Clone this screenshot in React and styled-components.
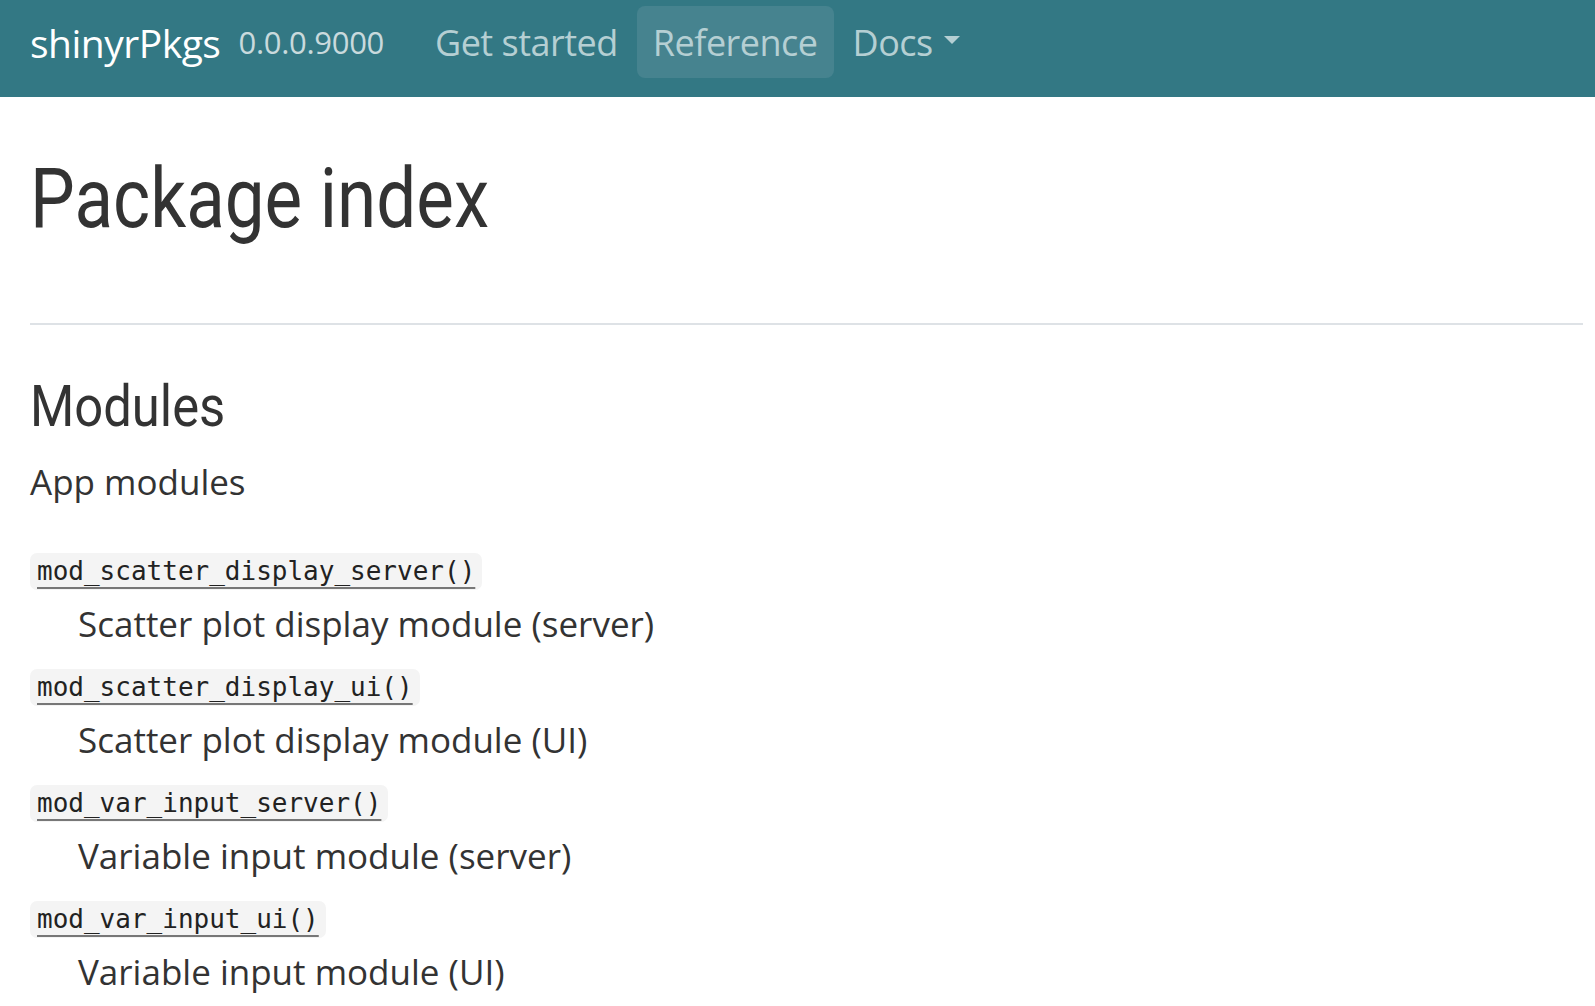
import React from 'react'
import styled, {createGlobalStyle} from 'styled-components'

const Global = createGlobalStyle`
  body {
    margin: 0;
    font-family: "Open Sans", "Noto Sans", sans-serif;
    color: #333;
    background: #fff;
  }
`

const items = [
  {name: 'mod_scatter_display_server()', desc: 'Scatter plot display module (server)'},
  {name: 'mod_scatter_display_ui()', desc: 'Scatter plot display module (UI)'},
  {name: 'mod_var_input_server()', desc: 'Variable input module (server)'},
  {name: 'mod_var_input_ui()', desc: 'Variable input module (UI)'},
]

function App() {
  return (
    <Wrap>
      <Global />
      <Nav>
        <Brand>shinyrPkgs</Brand>
        <Version>0.0.0.9000</Version>
        <Menu>
          <NavLink>Get started</NavLink>
          <NavLink active>Reference</NavLink>
          <NavLink>Docs<Caret /></NavLink>
        </Menu>
      </Nav>

      <Main>
        <Title>Package index</Title>
        <Rule />
        <Section>Modules</Section>
        <Sub>App modules</Sub>
        <List>
          {items.map(it => (
            <Item key={it.name}>
              <dt><Code>{it.name}</Code></dt>
              <Desc>{it.desc}</Desc>
            </Item>
          ))}
        </List>
      </Main>
    </Wrap>
  )
}

const Wrap = styled.div`
  width: 100%;
  min-height: 100vh;
`
const Nav = styled.nav`
  height: 97px;
  background: #337884;
  display: flex;
  align-items: center;
  padding: 6px 30px 19px;
  box-sizing: border-box;
`
const Brand = styled.span`
  color: #fff;
  font-size: 39px;
  letter-spacing: -0.5px;
`
const Version = styled.span`
  color: #c9dadd;
  font-size: 31px;
  margin-left: 18px;
  letter-spacing: -0.3px;
`
const Menu = styled.div`
  display: flex;
  align-items: center;
  gap: 3px;
  margin-left: 35px;
`
const NavLink = styled.span`
  display: flex;
  align-items: center;
  font-size: 36px;
  letter-spacing: -0.5px;
  color: #b5cfd3;
  padding: 0 16px;
  height: 72px;
  border-radius: 8px;
  background: ${p => p.active ? '#46838f' : 'transparent'};
`
const Caret = styled.span`
  display: inline-block;
  margin-left: 11px;
  border-top: 8px solid #b5cfd3;
  border-left: 8px solid transparent;
  border-right: 8px solid transparent;
  transform: translateY(-2px);
`
const Main = styled.main`
  padding: 0 12px 0 30px;
`
const Condensed = `
  font-family: "Roboto", "Liberation Sans", sans-serif;
  font-weight: 400;
  line-height: 1.1;
  color: #333;
  display: inline-block;
  transform-origin: left center;
`
const Title = styled.h1`
  ${Condensed}
  font-size: 84px;
  transform: scaleX(0.845);
  margin: 56px 0 0 0;
`
const Rule = styled.hr`
  border: 0;
  border-top: 2px solid #dee2e6;
  margin: 78px 0 0 0;
`
const Section = styled.h2`
  ${Condensed}
  font-size: 58px;
  transform: scaleX(0.875);
  margin: 50px 0 0 0;
`
const Sub = styled.p`
  font-size: 35px;
  margin: 19px 0 0 0;
  color: #333;
`
const List = styled.dl`
  margin: 48px 0 0 0;
`
const Item = styled.div`
  margin-bottom: 19px;
`
const Code = styled.code`
  display: inline-block;
  font-family: "DejaVu Sans Mono", "Liberation Mono", monospace;
  font-size: 26px;
  line-height: 37px;
  padding: 0 7px;
  background: #f4f4f4;
  border-radius: 7px;
  color: #222;
  text-decoration: underline;
  text-decoration-color: #777;
  text-decoration-thickness: 2px;
  text-underline-offset: 7px;
`
const Desc = styled.dd`
  margin: 8px 0 0 48px;
  font-size: 35px;
  line-height: 52px;
  color: #333;
`

export default App
